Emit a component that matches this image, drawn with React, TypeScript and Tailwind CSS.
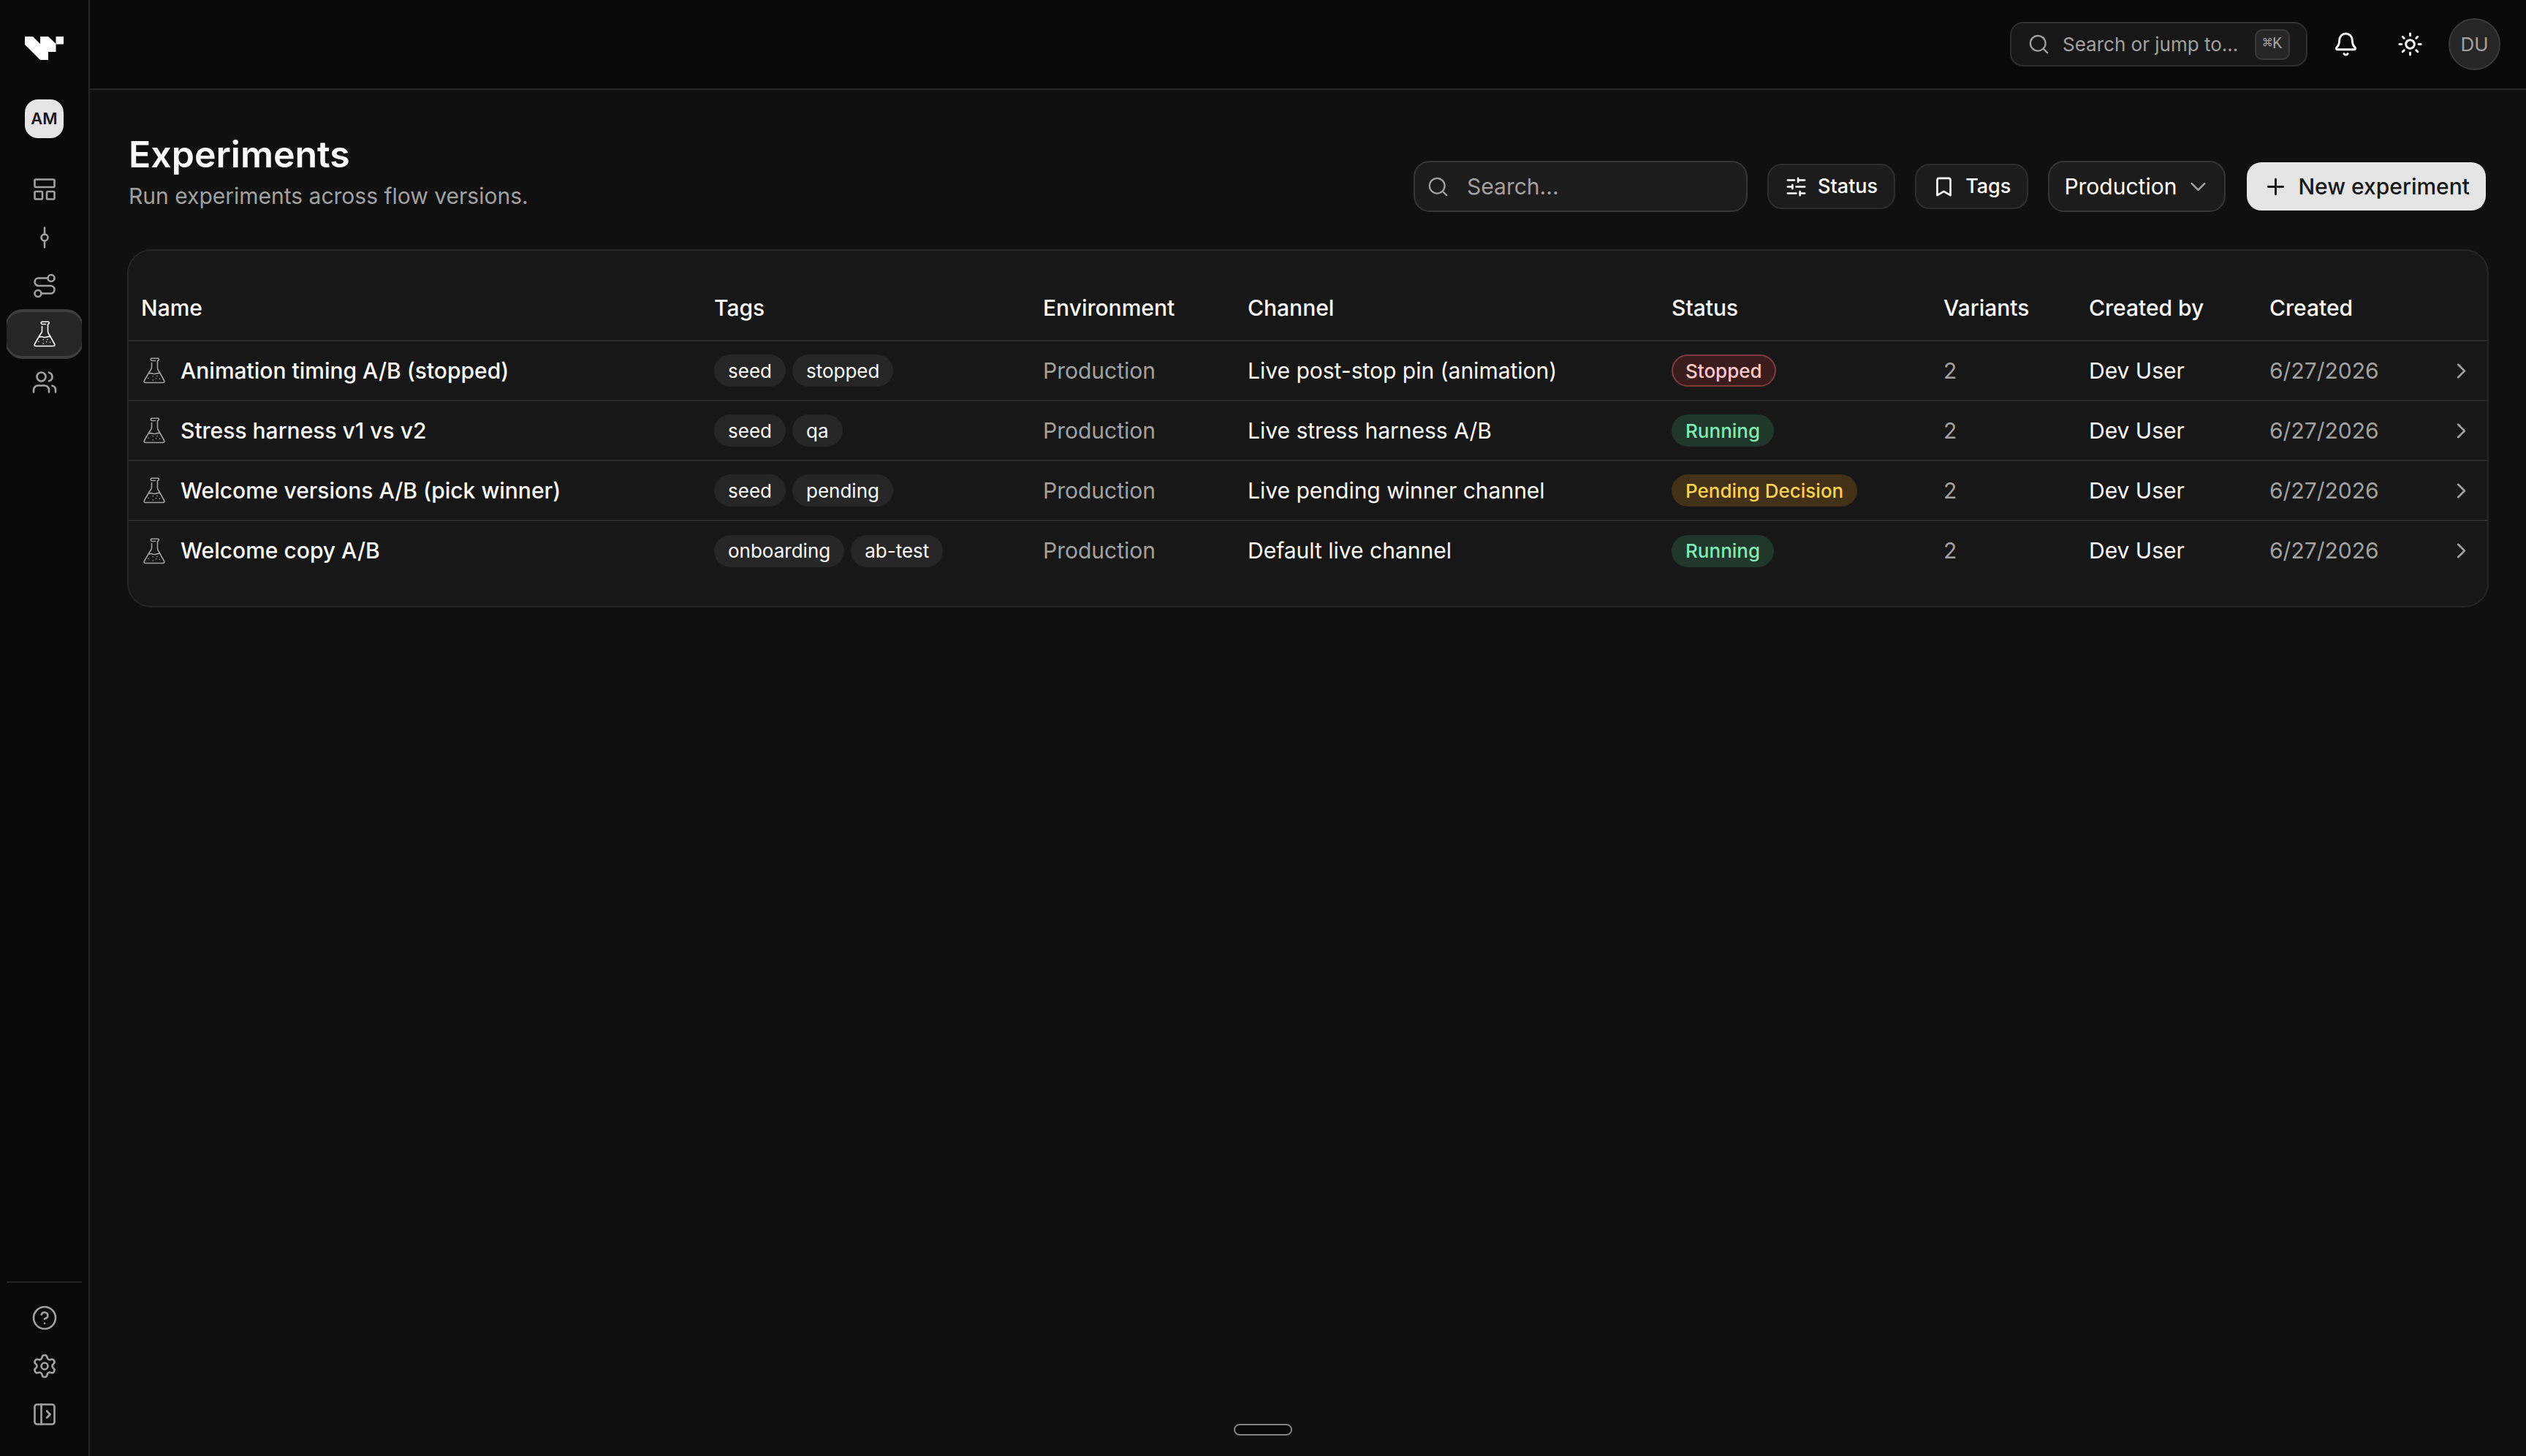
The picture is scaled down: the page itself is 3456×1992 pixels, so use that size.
import React from "react";
import {
  Bell,
  Bookmark,
  ChevronDown,
  ChevronRight,
  CircleQuestionMark,
  GitCommitVertical,
  LayoutPanelTop,
  PanelLeftOpen,
  Plus,
  Route,
  Search,
  Settings,
  SlidersHorizontal,
  Sun,
  Users,
} from "lucide-react";
import clsx from "clsx";

const experiments = [
  {
    name: "Animation timing A/B (stopped)",
    tags: ["seed", "stopped"],
    channel: "Live post-stop pin (animation)",
    status: "Stopped",
  },
  {
    name: "Stress harness v1 vs v2",
    tags: ["seed", "qa"],
    channel: "Live stress harness A/B",
    status: "Running",
  },
  {
    name: "Welcome versions A/B (pick winner)",
    tags: ["seed", "pending"],
    channel: "Live pending winner channel",
    status: "Pending Decision",
  },
  {
    name: "Welcome copy A/B",
    tags: ["onboarding", "ab-test"],
    channel: "Default live channel",
    status: "Running",
  },
];

const statusStyles: Record<string, string> = {
  Stopped: "border-[#7f3b3d] bg-[#3a1c1c] text-[#ffc9c9]",
  Running: "border-transparent bg-[#20382c] text-[#7eecb5]",
  "Pending Decision": "border-transparent bg-[#423116] text-[#fcd34d]",
};

const Logo = () => (
  <svg viewBox="0 0 53 32" className="w-[53px] h-8" fill="#fff">
    <path d="M0 0H11L21 10V0H32L42.500 10V21H32V32H21L0 11Z" />
    <path d="M42.500 0H53V10.500H42.500Z" />
  </svg>
);

const Flask = ({ className }: { className?: string }) => (
  <svg
    viewBox="0 0 36 36"
    className={clsx("w-9 h-9", className)}
    fill="none"
    stroke="currentColor"
    strokeWidth="1.6"
    strokeLinecap="round"
    strokeLinejoin="round"
  >
    <path d="M19.500 4.500H14.500C12.800 4.500 12.800 1.200 14.500 1.200H23C24.700 1.200 24.700 4.500 22.500 4.500V14.500C22.500 16 23.500 17.500 24.500 19L31.500 31.500C32.300 33.200 31.700 34.500 30 34.500H6C4.300 34.500 3.700 33.200 4.500 31.500L11.500 19.500C13 17 14.500 16 14.500 14V7.500" />
    <path d="M11.500 22C14 20.500 16 23 19 22.500C21.500 22 23 20.800 25.500 21.500" />
    <path d="M10 28.300h.01M16.200 25.700h.01M20.500 28.700h.01M16.200 31h.01M25.500 29.200h.01M22 25.500h.01" />
  </svg>
);

const NavItem = ({
  label,
  active,
  children,
}: {
  label: string;
  active?: boolean;
  children: React.ReactNode;
}) => (
  <a
    href="#"
    aria-label={label}
    className={clsx(
      "flex h-16 items-center justify-center rounded-[22px]",
      active
        ? "border-y-2 border-[#3e3e3e] bg-[#262626] text-white ring-2 ring-[#3e3e3e]"
        : "text-[#a1a1a1]"
    )}
  >
    {children}
  </a>
);

const Sidebar = () => (
  <aside className="flex w-[123px] shrink-0 flex-col border-r-2 border-[#262626] bg-[#090909] px-[9px]">
    <div className="flex flex-col items-center pt-[50px]">
      <Logo />
      <button className="mt-[54px] h-[53px] w-[53px] rounded-[18px] bg-[#e5e5e5] text-[22px] font-semibold text-[#171717]">
        AM
      </button>
    </div>
    <nav className="mt-9 flex flex-col gap-[2px] overflow-hidden py-[2px]">
      <NavItem label="Dashboard">
        <LayoutPanelTop size={36} strokeWidth={1.75} />
      </NavItem>
      <NavItem label="Versions">
        <GitCommitVertical size={36} strokeWidth={1.75} />
      </NavItem>
      <NavItem label="Flows">
        <Route size={36} strokeWidth={1.75} />
      </NavItem>
      <NavItem label="Experiments" active>
        <Flask />
      </NavItem>
      <NavItem label="Users">
        <Users size={36} strokeWidth={1.75} />
      </NavItem>
    </nav>
    <div className="mt-auto flex flex-col gap-[2px] border-t-2 border-[#222222] pt-4 pb-[25px]">
      <NavItem label="Help">
        <CircleQuestionMark size={36} strokeWidth={1.75} />
      </NavItem>
      <NavItem label="Settings">
        <Settings size={36} strokeWidth={1.75} />
      </NavItem>
      <NavItem label="Expand sidebar">
        <PanelLeftOpen size={36} strokeWidth={1.75} />
      </NavItem>
    </div>
  </aside>
);

const Topbar = () => (
  <header className="flex h-[123px] shrink-0 items-center justify-end gap-[17px] border-b-2 border-[#262626] bg-[#090909] pr-[35px]">
    <button className="flex h-[61px] w-[407px] items-center rounded-[18px] border-2 border-[#2e2e2e] bg-[#171717] px-[22px] text-[26px] text-[#a1a1a1]">
      <Search size={31} strokeWidth={1.75} />
      <span className="ml-[17px]">Search or jump to...</span>
      <kbd className="ml-auto flex h-[42px] w-12 items-center justify-center rounded-[10px] border-2 border-[#3a3a3a] bg-[#262626] font-['Liberation_Mono',monospace] text-[22px]">
        ⌘K
      </kbd>
    </button>
    <button
      aria-label="Notifications"
      className="flex h-[71px] w-[71px] items-center justify-center text-white"
    >
      <Bell size={35} />
    </button>
    <button
      aria-label="Toggle theme"
      className="flex h-[71px] w-[71px] items-center justify-center text-white"
    >
      <Sun size={35} />
    </button>
    <button className="h-[71px] w-[71px] rounded-full border-2 border-[#3a3a3a] bg-[#262626] text-[26px] text-[#a1a1a1]">
      DU
    </button>
  </header>
);

const FilterButton = ({ children }: { children: React.ReactNode }) => (
  <button className="flex h-[62px] items-center gap-[14px] rounded-[20px] border-2 border-[#2e2e2e] bg-[#1c1c1c] px-[22px] text-[27px] font-medium text-white">
    {children}
  </button>
);

const Toolbar = () => (
  <div className="flex items-center gap-[27px]">
    <label className="flex h-[70px] w-[457px] items-center gap-[24px] rounded-[22px] border-2 border-[#363636] bg-[#1c1c1c] pl-4 text-[#a1a1a1]">
      <Search size={31} strokeWidth={1.75} className="shrink-0" />
      <input
        type="text"
        aria-label="Search experiments"
        placeholder="Search..."
        className="w-full min-w-0 bg-transparent text-[30px] outline-none placeholder:text-[#a1a1a1]"
      />
    </label>
    <FilterButton>
      <SlidersHorizontal size={31} />
      Status
    </FilterButton>
    <FilterButton>
      <Bookmark size={31} />
      Tags
    </FilterButton>
    <div className="relative">
      <select
        aria-label="Environment"
        className="h-[70px] w-[243px] appearance-none rounded-[22px] border-2 border-[#363636] bg-[#1c1c1c] pl-5 text-[30px] text-white"
      >
        <option>Production</option>
      </select>
      <ChevronDown
        size={35}
        strokeWidth={1.75}
        className="pointer-events-none absolute top-[18px] right-5 text-[#a1a1a1]"
      />
    </div>
    <button className="flex h-[70px] items-center gap-[13px] rounded-[22px] border-2 border-transparent bg-[#e5e5e5] bg-clip-padding px-[22px] text-[30px] font-medium text-[#171717]">
      <Plus size={35} strokeWidth={2} />
      New experiment
    </button>
  </div>
);

const th = "h-[88px] px-[17px] text-left font-medium";
const td = "h-[82px] px-[17px]";

const ExperimentsTable = () => (
  <div className="overflow-hidden rounded-[33px] border-2 border-[#262626] bg-[#171717] py-[35px]">
    <table className="w-full table-fixed border-collapse whitespace-nowrap text-[30px] text-[#fafafa]">
      <colgroup>
        <col />
        <col className="w-[450px]" />
        <col className="w-[280px]" />
        <col className="w-[580px]" />
        <col className="w-[372px]" />
        <col className="w-[199px]" />
        <col className="w-[247px]" />
        <col className="w-[245px]" />
        <col className="w-[70px]" />
      </colgroup>
      <thead>
        <tr className="border-b-2 border-[#2b2b2b]">
          <th className={th}>Name</th>
          <th className={th}>Tags</th>
          <th className={th}>Environment</th>
          <th className={th}>Channel</th>
          <th className={th}>Status</th>
          <th className={th}>Variants</th>
          <th className={th}>Created by</th>
          <th className={th}>Created</th>
          <th aria-label="Open" />
        </tr>
      </thead>
      <tbody>
        {experiments.map((item) => (
          <tr
            key={item.name}
            className="border-b-2 border-[#2b2b2b] last:border-b-0"
          >
            <td className={td}>
              <div className="flex items-center gap-[18px] font-medium">
                <Flask className="text-[#a1a1a1]" />
                {item.name}
              </div>
            </td>
            <td className={td}>
              {/* TAGS */}
              <div className="flex gap-[9px]">
                {item.tags.map((tag) => (
                  <span
                    key={tag}
                    className="flex h-11 items-center rounded-full bg-[#262626] px-[19px] text-[26px]"
                  >
                    {tag}
                  </span>
                ))}
              </div>
            </td>
            <td className={clsx(td, "text-[#a1a1a1]")}>Production</td>
            <td className={td}>{item.channel}</td>
            <td className={td}>
              <span
                className={clsx(
                  "flex h-11 w-fit items-center rounded-full border-2 px-[17px] text-[26px] font-medium",
                  statusStyles[item.status]
                )}
              >
                {item.status}
              </span>
            </td>
            <td className={clsx(td, "text-[#a1a1a1]")}>2</td>
            <td className={td}>Dev User</td>
            <td className={clsx(td, "text-[#a1a1a1]")}>6/27/2026</td>
            <td className={td}>
              <ChevronRight
                size={35}
                strokeWidth={1.75}
                className="text-[#a1a1a1]"
              />
            </td>
          </tr>
        ))}
      </tbody>
    </table>
  </div>
);

const App = () => {
  return (
    <div className="flex min-h-screen bg-[#101010] font-['Inter','Liberation_Sans',sans-serif] text-[#fafafa]">
      <Sidebar />
      <div className="flex min-w-0 grow flex-col">
        <Topbar />
        <main className="flex flex-col gap-[51px] px-[51px] pt-[53px]">
          <div className="flex items-end justify-between px-[2px]">
            <div>
              <h1 className="text-[50px] leading-[70px] font-semibold">
                Experiments
              </h1>
              <p className="text-[30px] leading-[44px] text-[#a1a1a1]">
                Run experiments across flow versions.
              </p>
            </div>
            <Toolbar />
          </div>
          <ExperimentsTable />
        </main>
      </div>
      <button
        aria-label="Open panel"
        className="fixed bottom-7 left-1/2 h-4 w-20 -translate-x-1/2 rounded-full border-2 border-[#828282] bg-[#0a0a0a]"
      />
    </div>
  );
};

export default App;
